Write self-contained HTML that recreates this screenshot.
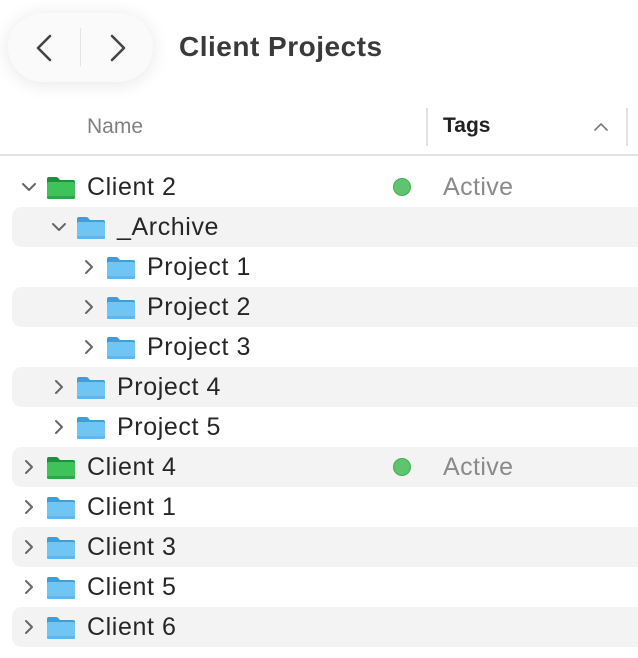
<!DOCTYPE html>
<html><head><style>
body{margin:0;width:638px;height:658px;background:#fff;font-family:"Liberation Sans",Arial,sans-serif;position:relative;overflow:hidden}
.pill{position:absolute;left:8px;top:13px;width:145px;height:69px;border-radius:35px;background:#fafafa;box-shadow:0 2px 18px rgba(0,0,0,.10);}
.pill .sep{position:absolute;left:72px;top:15px;width:1px;height:38px;background:#e4e4e4}
.title{position:absolute;left:179px;top:31px;font-size:28px;letter-spacing:0.5px;font-weight:bold;color:#3a3a3a}
.hname{position:absolute;left:87px;top:115px;font-size:21px;color:#808080}
.htags{position:absolute;left:443px;top:114px;font-size:21px;font-weight:bold;color:#222}
.vl{position:absolute;top:108px;width:2px;height:38px;background:#e2e2e2}
.hline{position:absolute;left:0;top:154px;width:638px;height:2px;background:#e3e3e3}
.row{position:absolute;left:12px;width:626px;height:40px}
.row.s{background:#f3f3f3;border-radius:10px 0 0 10px}
.row .t{position:absolute;top:6px;font-size:25px;letter-spacing:0.6px;color:#262626}
.row svg{position:absolute}
.dot{position:absolute;left:381px;top:11px;width:18px;height:18px;border-radius:50%;background:#5fc46f;border:1px solid #3fb04f;box-sizing:border-box}
.act{position:absolute;left:431px;top:6px;font-size:25px;letter-spacing:0.4px;color:#8a8a8a}
</style></head><body>
<div class="pill"><svg style="position:absolute;left:26px;top:21px" width="20" height="28"><path d="M16 2 L4 14 L16 26" fill="none" stroke="#444" stroke-width="2.6" stroke-linecap="round" stroke-linejoin="round"/></svg><div class="sep"></div><svg style="position:absolute;left:100px;top:21px" width="20" height="28"><path d="M4 2 L16 14 L4 26" fill="none" stroke="#444" stroke-width="2.6" stroke-linecap="round" stroke-linejoin="round"/></svg></div>
<div class="title">Client Projects</div>
<div class="hname">Name</div>
<div class="vl" style="left:426px"></div>
<div class="htags">Tags</div>
<svg style="position:absolute;left:593px;top:121px" width="16" height="12"><path d="M2 9 L8 3 L14 9" fill="none" stroke="#777" stroke-width="1.6" stroke-linecap="round"/></svg>
<div class="vl" style="left:626px"></div>
<div class="hline"></div>
<div id="rows"></div>
<script>
var rows=[["Client 2",0,"d","g",1],["_Archive",1,"d","b",0],["Project 1",2,"r","b",0],["Project 2",2,"r","b",0],["Project 3",2,"r","b",0],["Project 4",1,"r","b",0],["Project 5",1,"r","b",0],["Client 4",0,"r","g",1],["Client 1",0,"r","b",0],["Client 3",0,"r","b",0],["Client 5",0,"r","b",0],["Client 6",0,"r","b",0]];
var h="";
rows.forEach(function(r,i){
var x=r[1]*30, top=167+i*40;
var chev=r[2]=="d"?'<svg style="left:'+(9+x)+'px;top:13px" width="16" height="14"><path d="M2 4 L8 10 L14 4" fill="none" stroke="#666" stroke-width="2" stroke-linecap="round" stroke-linejoin="round"/></svg>':'<svg style="left:'+(11+x)+'px;top:11px" width="12" height="18"><path d="M3 3 L9 9 L3 15" fill="none" stroke="#666" stroke-width="2" stroke-linecap="round" stroke-linejoin="round"/></svg>';
var c1=r[3]=="g"?"#2aa84a":"#5cb8ec",c2=r[3]=="g"?"#3ec25a":"#6fc6f4",c0=r[3]=="g"?"#1f8f3b":"#3e9fd8";
var f='<svg style="left:'+(34+x)+'px;top:9px" width="30" height="24"><path d="M1 3 Q1 1 3 1 L10 1 Q12 1 13 3 L14 4 L27 4 Q29 4 29 6 L29 21 Q29 23 27 23 L3 23 Q1 23 1 21 Z" fill="'+c0+'"/><rect x="1" y="6" width="28" height="17" rx="2" fill="'+c2+'"/><rect x="1" y="20" width="28" height="3" rx="1.5" fill="'+c1+'"/></svg>';
h+='<div class="row'+(i%2?' s':'')+'" style="top:'+top+'px">'+chev+f+'<div class="t" style="left:'+(75+x)+'px">'+r[0]+'</div>'+(r[4]?'<div class="dot"></div><div class="act">Active</div>':'')+'</div>';
});
document.getElementById("rows").innerHTML=h;
</script>
</body></html>
